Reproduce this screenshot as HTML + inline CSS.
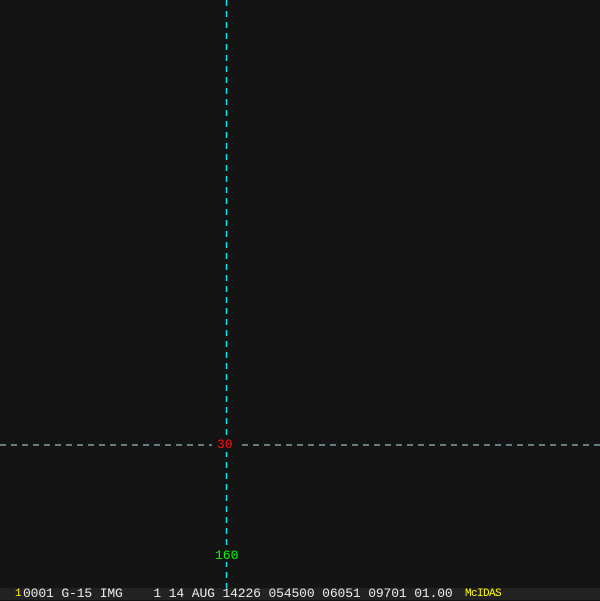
<!DOCTYPE html><html><head><style>
body{margin:0;width:600px;height:600px;background:#141414;position:relative;overflow:hidden;font-family:"Liberation Mono",monospace;}
.t{position:absolute;font-size:13px;line-height:13px;}
</style></head><body>
<svg width="600" height="600" style="position:absolute;left:0;top:0">
<line x1="226.5" y1="0" x2="226.5" y2="588" stroke="#00e0f0" stroke-width="1.5" stroke-dasharray="6,5"/>
<line x1="0" y1="445" x2="600" y2="445" stroke="#b8e8ee" stroke-width="1" stroke-dasharray="6,5"/>
<rect x="212" y="437" width="26" height="15" fill="#141414"/>
<rect x="212" y="547" width="28" height="15" fill="#141414"/>
<rect x="0" y="588" width="600" height="12" fill="#222"/>
</svg>
<div class="t" style="left:217px;top:438px;color:#ff1010">30</div>
<div class="t" style="left:215px;top:549px;color:#00ff00">160</div>
<div class="t" style="left:15px;top:588px;color:#ffff00;font-size:11px">1</div>
<div class="t" style="left:23px;top:587px;color:#eee;white-space:pre;letter-spacing:-0.13px">0001 G-15 IMG    1 14 AUG 14226 054500 06051 09701 01.00</div>
<div class="t" style="left:465px;top:588px;color:#ffff00;font-size:11px;letter-spacing:-0.6px">McIDAS</div>
</body></html>
